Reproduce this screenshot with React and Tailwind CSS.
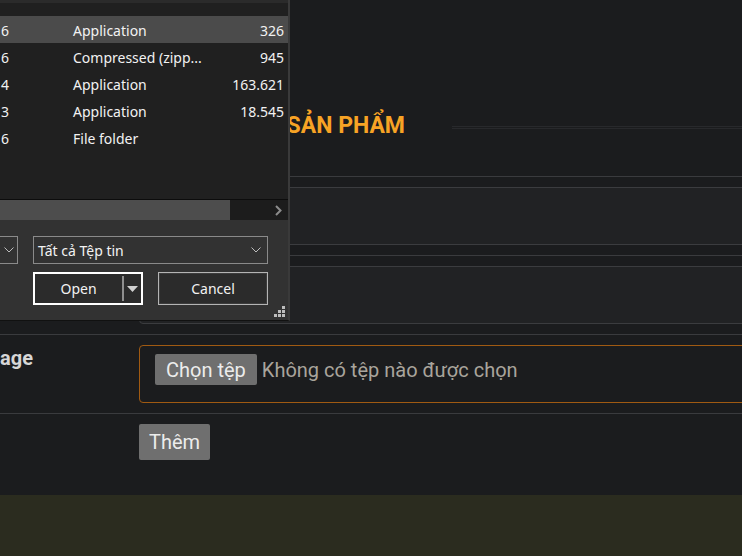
import React from 'react';

const files = [
  { d: '6', type: 'Application', size: '326', selected: true },
  { d: '6', type: 'Compressed (zipp...', size: '945' },
  { d: '4', type: 'Application', size: '163.621' },
  { d: '3', type: 'Application', size: '18.545' },
  { d: '6', type: 'File folder', size: '' },
];

const Chevron = ({ className = '' }) => (
  <svg className={className} width="10" height="6" viewBox="0 0 10 6" fill="none">
    <path d="M0.5 0.5L5 5L9.5 0.5" stroke="#bdbdbd" strokeWidth="1" />
  </svg>
);

// Windows style open-file dialog lying over the page
const FileDialog = () => (
  <div className="absolute left-0 top-0 flex h-[321px] w-[290px] flex-col border-r-2 border-b border-r-[#3a3a3a] border-b-[#111] font-['Noto_Sans',sans-serif] text-[14px] text-[#f2f2f2]">
    {/* File list */}
    <div className="h-[199px] border-t-[3px] border-[#2b2b2b] bg-[#202020] pt-[13px]">
      {files.map((f, i) => (
        <div
          key={i}
          className={`flex h-[27px] items-center pr-[4px] pt-px ${f.selected ? 'bg-[#4b4b4b]' : ''}`}
        >
          <span className="w-[9px] text-right">{f.d}</span>
          <span className="ml-[64px] flex-1 whitespace-nowrap">{f.type}</span>
          <span className="text-right">{f.size}</span>
        </div>
      ))}
    </div>

    {/* Horizontal scroll bar */}
    <div className="flex h-[21px] border-t border-[#0c0c0c] bg-[#1c1c1c]">
      <div className="h-full w-[230px] bg-[#4d4d4d]" />
      <div className="flex flex-1 items-center justify-end pr-[6px]">
        <svg width="7" height="11" viewBox="0 0 7 11" fill="none">
          <path d="M1 1L5.5 5.5L1 10" stroke="#8c8c8c" strokeWidth="2" />
        </svg>
      </div>
    </div>

    {/* Bottom panel */}
    <div className="relative flex-1 bg-[#323232] pt-[16px]">
      <div className="flex h-[28px]">
        <div className="flex w-[18px] items-center justify-center border-y border-r border-[#8a8a8a]">
          <Chevron />
        </div>
        <div className="ml-[15px] flex w-[235px] items-center justify-between border border-[#8a8a8a] pl-[4px] pr-[6px]">
          <span>Tất cả Tệp tin</span>
          <Chevron />
        </div>
      </div>
      <div className="ml-[33px] mt-[8px] flex h-[33px] gap-[15px]">
        <div className="flex w-[110px] items-center border-2 border-white bg-[#2b2b2b]">
          <span className="flex-1 text-center">Open</span>
          <span className="h-[25px] w-[2px] bg-[#8f8f8f]" />
          <svg className="mx-[3px]" width="11" height="6" viewBox="0 0 11 6">
            <path d="M0 0H11L5.5 6Z" fill="#d0d0d0" />
          </svg>
        </div>
        <div className="flex w-[110px] items-center justify-center border border-[#b4b4b4] bg-[#2b2b2b] outline outline-1 -outline-offset-2 outline-[#3c3c3c]">
          Cancel
        </div>
      </div>
      {/* resize grip */}
      <svg className="absolute bottom-[3px] right-[3px]" width="11" height="11" viewBox="0 0 11 11" fill="#bdbdbd">
        <rect x="8" y="0" width="3" height="3" />
        <rect x="4" y="4" width="3" height="3" />
        <rect x="8" y="4" width="3" height="3" />
        <rect x="0" y="8" width="3" height="3" />
        <rect x="4" y="8" width="3" height="3" />
        <rect x="8" y="8" width="3" height="3" />
      </svg>
    </div>
  </div>
);

const Row = ({ label, children }) => (
  <div className="flex border-t border-[#3a3b3e] py-[10px]">
    <div className="w-[139px] shrink-0 pt-px text-[20px] font-bold leading-[24px] text-[#d6d6d6]">{label}</div>
    <div className="flex-1">{children}</div>
  </div>
);

export default function App() {
  return (
    <div className="relative h-[556px] w-[742px] overflow-hidden bg-[#1b1c1e] font-['Roboto',sans-serif]">
      <main className="h-[495px] pt-[112px]">
        <div className="flex">
          <h2 className="w-[405px] shrink-0 whitespace-nowrap text-right text-[23px] font-bold leading-[27px] text-[#f7a325]">
            THÊM SẢN PHẨM
          </h2>
          <div className="ml-[47px] mt-[14px] h-[3px] flex-1 border-y border-[#28292c]" />
        </div>

        <div className="mt-[37px]">
          <Row label="Tên">
            <div className="h-[58px] w-[700px] rounded-[4px] border border-[#3b3c3f] bg-[#212224]" />
          </Row>
          <Row label="Giá">
            <div className="h-[58px] w-[700px] rounded-[4px] border border-[#3b3c3f] bg-[#212224]" />
          </Row>
          <Row label="age">
            <div className="flex h-[58px] w-[700px] items-start rounded-[4px] border border-[#a05a12] pl-[15px] pt-[8px]">
              <span className="flex h-[31px] items-center rounded-[2px] bg-[#6f6f6f] px-[11px] text-[20px] text-[#ececec]">
                Chọn tệp
              </span>
              <span className="ml-[5px] flex h-[31px] items-center text-[20px] text-[#a9a49c]">
                Không có tệp nào được chọn
              </span>
            </div>
          </Row>
          <div className="flex border-t border-[#3a3b3e] pt-[10px]">
            <div className="w-[139px] shrink-0" />
            <button className="flex h-[36px] w-[71px] items-center justify-center rounded-[2px] bg-[#6f6f6f] text-[20px] text-[#ececec]">
              Thêm
            </button>
          </div>
        </div>
      </main>
      <footer className="h-[61px] bg-[#2b2c1f]" />

      <FileDialog />
    </div>
  );
}
